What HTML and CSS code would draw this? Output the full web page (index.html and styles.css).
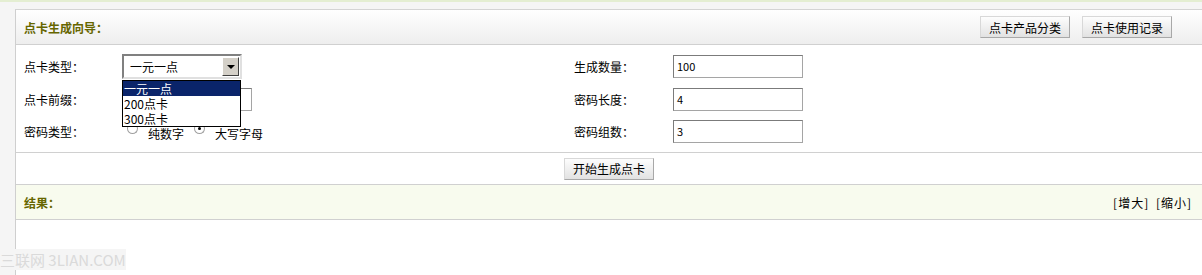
FILE: index.html
```html
<!DOCTYPE html>
<html>
  <head>
    <meta charset="utf-8">
    <title>点卡生成向导</title>
    <link rel="stylesheet" href="styles.css">
  </head>
  <body>
  <div class="page">
    <div class="panel">
      <div class="head">
        <div class="title">点卡生成向导：</div>
        <div class="tools">
          <button class="btn">点卡产品分类</button>
          <button class="btn">点卡使用记录</button>
        </div>
      </div>

      <div class="form">
        <div class="col">
          <div class="row">
            <div class="label">点卡类型：</div>
            <div class="select">
              <span class="select-val">一元一点</span>
              <span class="select-btn"><span class="arrow"></span></span>
            </div>
          </div>
          <div class="row">
            <div class="label">点卡前缀：</div>
            <div class="input short"></div>
          </div>
          <div class="row">
            <div class="label">密码类型：</div>
            <div class="radios">
              <span class="radio"></span><span class="radio-text">纯数字</span>
              <span class="radio on"></span><span class="radio-text">大写字母</span>
            </div>
          </div>
          <div class="droplist">
            <div class="opt sel">一元一点</div>
            <div class="opt">200点卡</div>
            <div class="opt">300点卡</div>
          </div>
        </div>
        <div class="col right">
          <div class="row">
            <div class="label">生成数量：</div>
            <div class="input">100</div>
          </div>
          <div class="row">
            <div class="label">密码长度：</div>
            <div class="input">4</div>
          </div>
          <div class="row">
            <div class="label">密码组数：</div>
            <div class="input">3</div>
          </div>
        </div>
      </div>

      <div class="submit">
        <button class="btn">开始生成点卡</button>
      </div>

      <div class="result">
        <div class="title">结果：</div>
        <div class="zoom">[增大] [缩小]</div>
      </div>
      <div class="result-body"></div>
    </div>
  </div>
  <div class="mark">三联网 3LIAN.COM</div>
  </body>
</html>
```

FILE: styles.css
```css
html, body {
    margin: 0;
    padding: 0;
}

body {
    background: #f5f5f5;
    border-top: 2px solid #e4eed2;
    font-family: "Noto Sans CJK SC", "Liberation Sans", sans-serif;
    font-size: 12px;
    color: #000;
    height: 273px;
    overflow: hidden;
    position: relative;
}

.page {
    padding: 7px 0 0 15px;
}

.panel {
    background: #fff;
    border-left: 1px solid #cfcfcf;
    border-top: 1px solid #d4d4d4;
    height: 270px;
}

.head {
    height: 34px;
    display: flex;
    align-items: center;
    justify-content: space-between;
    padding: 0 30px 0 8px;
    background: linear-gradient(#ffffff, #eeeeee);
    border-bottom: 1px solid #d0d0d0;
}

.title {
    font-weight: bold;
    color: #666600;
}

.tools {
    display: flex;
    gap: 12px;
}

.btn {
    font-family: inherit;
    font-size: 12px;
    height: 22px;
    padding: 0 8px;
    background: linear-gradient(#fdfdfd, #e2e2e2);
    border: 1px solid #d8d8d8;
    border-right-color: #a8a8a8;
    border-bottom-color: #a8a8a8;
    color: #000;
}

.form {
    display: flex;
    padding: 5px 0 4px 8px;
    border-bottom: 1px solid #d0d0d0;
}

.col {
    width: 550px;
    position: relative;
}

.row {
    height: 33px;
    display: flex;
    align-items: center;
}

.row:nth-child(2) {
    height: 32px;
}

.label {
    width: 98px;
}

.right .label {
    width: 99px;
}

.input {
    width: 122px;
    height: 17px;
    border: 1px solid #a5a5a5;
    border-top-color: #7b7b7b;
    border-left-color: #7b7b7b;
    padding: 2px 3px;
    font-size: 11px;
    line-height: 17px;
}

.select {
    height: 21px;
    border: 2px solid #808080;
    border-right-color: #e0e0e0;
    border-bottom-color: #e0e0e0;
    display: flex;
    align-items: center;
    justify-content: space-between;
    padding-left: 6px;
    width: 110px;
}

.select-btn {
    width: 15px;
    height: 17px;
    margin-right: 1px;
    background: #d4d0c8;
    border: 1px solid #fff;
    border-right-color: #404040;
    border-bottom-color: #404040;
    display: flex;
    align-items: center;
    justify-content: center;
}

.arrow {
    width: 0;
    height: 0;
    border-left: 4px solid transparent;
    border-right: 4px solid transparent;
    border-top: 4px solid #000;
}

.radios {
    display: flex;
    align-items: center;
    padding-left: 5px;
}

.radio {
    width: 9px;
    height: 9px;
    border-radius: 50%;
    border: 1px solid #a0a0a0;
    border-top-color: #808080;
    margin-top: -7px;
    position: relative;
    background: #fff;
}

.radio.on:after {
    content: "";
    position: absolute;
    left: 3px;
    top: 3px;
    width: 3px;
    height: 3px;
    border-radius: 50%;
    background: #000;
}

.radio-text {
    margin: 0 10px 0 10px;
    padding-top: 4px;
}

.droplist {
    position: absolute;
    left: 98px;
    top: 30px;
    width: 117px;
    border: 1px solid #000;
    background: #fff;
}

.opt {
    height: 15px;
    line-height: 15px;
    padding-left: 1px;
}

.opt.sel {
    background: #0a246a;
    color: #fff;
}

.submit {
    height: 31px;
    display: flex;
    align-items: center;
    justify-content: center;
    border-bottom: 1px solid #d0d0d0;
}

.result {
    height: 34px;
    display: flex;
    align-items: center;
    justify-content: space-between;
    padding: 0 10px 0 8px;
    background: #f8fbee;
    border-bottom: 1px solid #d0d0d0;
}

.zoom {
    letter-spacing: 1px;
    word-spacing: 3px;
}

.mark {
    position: absolute;
    left: 0;
    bottom: 5px;
    font-size: 15px;
    color: #dadada;
    background: #f5f5f5;
}
```
